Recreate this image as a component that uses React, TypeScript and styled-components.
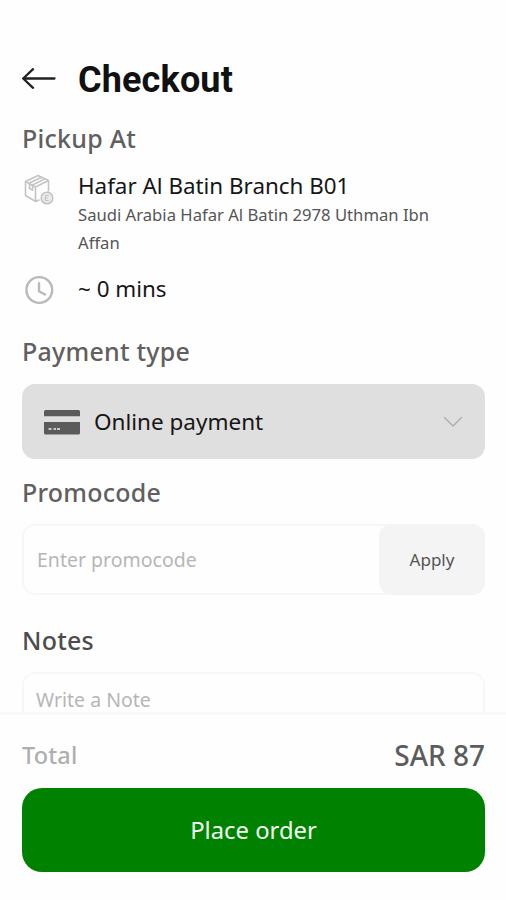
import React from "react";
import styled, { createGlobalStyle } from "styled-components";

const GlobalStyle = createGlobalStyle`
  *, *::before, *::after { box-sizing: border-box; }
  body {
    margin: 0;
    background: #fefefe;
    font-family: "Noto Sans", "Open Sans", sans-serif;
    color: #161616;
  }
  button, input { font-family: inherit; margin: 0; }
`;

const Screen = styled.div`
  width: 506px;
  height: 900px;
  display: flex;
  flex-direction: column;
  overflow: hidden;
`;

const Content = styled.main`
  flex: 1;
  min-height: 0;
  overflow: hidden;
  padding: 56px 21px 0 22px;
`;

const Header = styled.header`
  display: flex;
  align-items: center;
  height: 46px;
`;

const BackButton = styled.button`
  display: flex;
  width: 56px;
  padding: 0;
  border: 0;
  background: none;
`;

const Title = styled.h1`
  margin: 2px 0 0;
  font: 700 36px/46px Roboto, sans-serif;
  letter-spacing: 0.15px;
  color: #111;
`;

const SectionTitle = styled.h2<{ $top: number; $tone?: string }>`
  margin: ${(p) => p.$top}px 0 0;
  font-size: 25px;
  line-height: 36px;
  font-weight: 500;
  letter-spacing: 0.25px;
  color: ${(p) => p.$tone ?? "#606060"};
`;

const InfoRow = styled.div<{ $top: number }>`
  display: flex;
  margin-top: ${(p) => p.$top}px;
`;

const InfoIcon = styled.div<{ $top: number }>`
  width: 56px;
  padding-top: ${(p) => p.$top}px;
  flex: none;
  svg { display: block; }
`;

const InfoTitle = styled.div`
  font-size: 22.4px;
  line-height: 32px;
`;

const Address = styled.div`
  width: 370px;
  margin: -1px 0 1px;
  font-size: 16.65px;
  line-height: 28px;
  color: #555;
`;

const PaymentSelect = styled.button`
  display: flex;
  align-items: center;
  width: 100%;
  height: 75px;
  margin-top: 15px;
  padding: 1px 22px 0;
  border: 0;
  border-radius: 13px;
  background: #dfdfdf;
  text-align: left;
  svg { flex: none; }
`;

const PaymentName = styled.span`
  flex: 1;
  padding-left: 14px;
  font-size: 22.5px;
  line-height: 32px;
  color: #161616;
`;

const PromoField = styled.div`
  display: flex;
  height: 71px;
  margin-top: 14px;
  border: 2px solid #f7f7f7;
  border-radius: 13px;
`;

const FieldInput = styled.input`
  flex: 1;
  min-width: 0;
  padding: 0 0 0 13px;
  border: 0;
  outline: 0;
  background: none;
  font-size: 19.5px;
  &::placeholder { color: #b6b6b6; opacity: 1; }
`;

const ApplyButton = styled.button`
  width: 106px;
  margin: -2px -2px -2px 0;
  padding: 0 0 1px;
  border: 0;
  border-radius: 13px;
  background: #f4f4f4;
  font-size: 17px;
  color: #555;
`;

const NoteField = styled.div`
  display: flex;
  height: 110px;
  margin-top: 14px;
  padding: 5px 0 0;
  border: 2px solid #f7f7f7;
  border-radius: 13px;
  align-items: flex-start;
  ${FieldInput} { height: 40px; padding-left: 12px; }
`;

const Footer = styled.footer`
  height: 188px;
  flex: none;
  padding: 21px 21px 0 22px;
  border-top: 3px solid #f9f9f9;
`;

const TotalRow = styled.div`
  display: flex;
  align-items: center;
  justify-content: space-between;
  height: 37px;
`;

const TotalLabel = styled.span`
  font-size: 23.5px;
  font-weight: 500;
  letter-spacing: 0.15px;
  color: #afafaf;
`;

const TotalAmount = styled.span`
  font-size: 28px;
  font-weight: 500;
  color: #5c5c5c;
`;

const PlaceOrder = styled.button`
  width: 100%;
  height: 84px;
  margin-top: 15px;
  padding: 0 0 1px;
  border: 0;
  border-radius: 20px;
  background: #008200;
  font-size: 23.8px;
  color: #f4fff4;
`;

const BackArrow = () => (
  <svg width="34" height="24" viewBox="0 0 34 24" fill="none" stroke="#222" strokeWidth="2.3" strokeLinecap="round" strokeLinejoin="round">
    <path d="M32.5 11.5H1.2M11 2.2 1.2 11.5 11 20.8" />
  </svg>
);

const PackageIcon = () => (
  <svg width="32" height="32" viewBox="0 0 32 32" fill="none" stroke="#c4c4c4" strokeWidth="1.6" strokeLinejoin="round">
    <path d="M3.5 7.500 16 1.500l10.500 5L13.500 13zM3.500 7.500v14L13.500 27.500l4-1.800M13.500 13v14.500M26.500 6.500v11" />
    <path d="M7 9.200 19.500 3.200M10.500 11 23 4.900M7.500 9.500v5l3 1.600v-5" />
    <circle cx="25" cy="24" r="5.800" fill="#ebebeb" />
    <path d="M26.800 21.500h-3.400v5h3.400M23.400 24h2.800" strokeWidth="1.200" />
  </svg>
);

const ClockIcon = () => (
  <svg width="34" height="30" viewBox="0 0 34 30" fill="none" stroke="#b9b9b9" strokeWidth="2.4" strokeLinecap="round" strokeLinejoin="round">
    <circle cx="17.300" cy="15" r="12.900" />
    <path d="M17 8.200v8l6 3.300" />
  </svg>
);

const CardIcon = () => (
  <svg width="36" height="25" viewBox="0 0 36 25">
    <path d="M1.500 0h33q1.500 0 1.500 1.500V6.200H0V1.500Q0 0 1.500 0zM0 12h36v11q0 1.500-1.500 1.500h-33Q0 24.500 0 23z" fill="#5b5b5b" />
    <path d="M4.500 19h3M9.500 19h2.500M13 19h3" stroke="#c9c9c9" strokeWidth="2" />
  </svg>
);

const ChevronIcon = () => (
  <svg width="20" height="12" viewBox="0 0 20 12" fill="none" stroke="#b0b0b0" strokeWidth="1.5" strokeLinecap="round" strokeLinejoin="round">
    <path d="m1.500 1.500 8.500 8.500 8.500-8.500" />
  </svg>
);

export default function App() {
  return (
    <>
      <GlobalStyle />
      <Screen>
        <Content>
          <Header>
            <BackButton aria-label="Back"><BackArrow /></BackButton>
            <Title>Checkout</Title>
          </Header>

          <SectionTitle $top={18}>Pickup At</SectionTitle>
          <InfoRow $top={14}>
            <InfoIcon $top={4}><PackageIcon /></InfoIcon>
            <div>
              <InfoTitle>Hafar Al Batin Branch B01</InfoTitle>
              <Address>Saudi Arabia Hafar Al Batin 2978 Uthman Ibn Affan</Address>
            </div>
          </InfoRow>
          <InfoRow $top={15}>
            <InfoIcon $top={2}><ClockIcon /></InfoIcon>
            <InfoTitle>~ 0 mins</InfoTitle>
          </InfoRow>

          <SectionTitle $top={28}>Payment type</SectionTitle>
          <PaymentSelect>
            <CardIcon />
            <PaymentName>Online payment</PaymentName>
            <ChevronIcon />
          </PaymentSelect>

          <SectionTitle $top={15}>Promocode</SectionTitle>
          <PromoField>
            <FieldInput placeholder="Enter promocode" />
            <ApplyButton>Apply</ApplyButton>
          </PromoField>

          <SectionTitle $top={27} $tone="#4c4c4c">Notes</SectionTitle>
          <NoteField>
            <FieldInput placeholder="Write a Note" />
          </NoteField>
        </Content>

        <Footer>
          <TotalRow>
            <TotalLabel>Total</TotalLabel>
            <TotalAmount>SAR 87</TotalAmount>
          </TotalRow>
          <PlaceOrder>Place order</PlaceOrder>
        </Footer>
      </Screen>
    </>
  );
}
